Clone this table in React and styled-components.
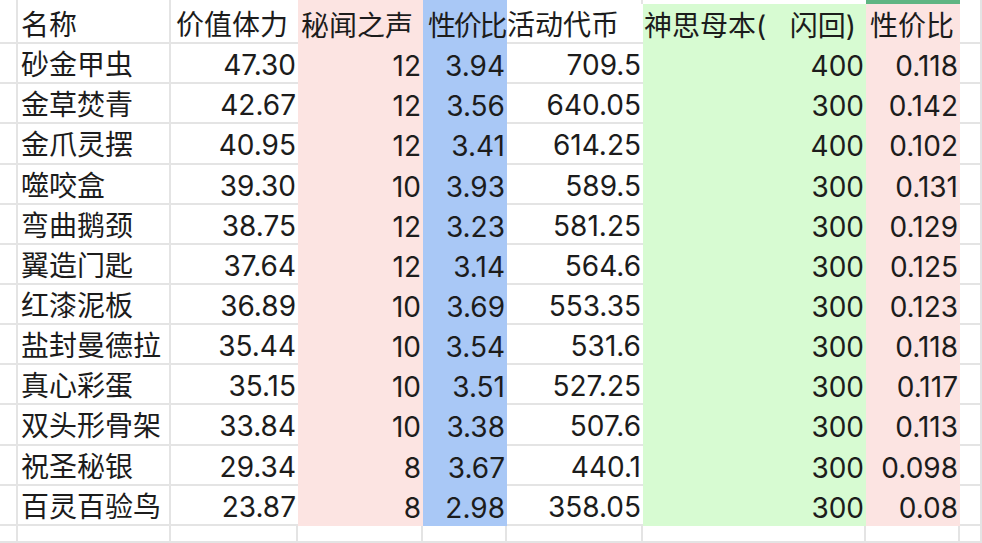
import React from "react";
import styled, { createGlobalStyle } from "styled-components";

const Global = createGlobalStyle`
  html, body { margin: 0; padding: 0; background: #ffffff; }
  body { width: 982px; height: 543px; overflow: hidden; }
`;

const GRID = "#e4e4e4";
const PINK = "#fce4e2";
const BLUE = "#a9c8f6";
const GREEN = "#d7fbd2";
const BAR = "#5fb583";

const COLS = [
  { w: 18 },
  { w: 153, align: "left" },
  { w: 127 },
  { w: 125, fill: PINK },
  { w: 84, fill: BLUE },
  { w: 136 },
  { w: 223, fill: GREEN },
  { w: 94, fill: PINK },
  { w: 22 },
];

const HEADER_PAD = [0, 3, 5, 3, 5, 0, 1, 4, 0];
const HEADER_TIGHT = [false, false, false, false, true, false, false, false, false];

const header = ["", "名称", "价值体力", "秘闻之声", "性价比", "活动代币", "神思母本(   闪回)", "性价比", ""];

const rows = [
  ["砂金甲虫", "47.30", "12", "3.94", "709.5", "400", "0.118"],
  ["金草焚青", "42.67", "12", "3.56", "640.05", "300", "0.142"],
  ["金爪灵摆", "40.95", "12", "3.41", "614.25", "400", "0.102"],
  ["噬咬盒", "39.30", "10", "3.93", "589.5", "300", "0.131"],
  ["弯曲鹅颈", "38.75", "12", "3.23", "581.25", "300", "0.129"],
  ["翼造门匙", "37.64", "12", "3.14", "564.6", "300", "0.125"],
  ["红漆泥板", "36.89", "10", "3.69", "553.35", "300", "0.123"],
  ["盐封曼德拉", "35.44", "10", "3.54", "531.6", "300", "0.118"],
  ["真心彩蛋", "35.15", "10", "3.51", "527.25", "300", "0.117"],
  ["双头形骨架", "33.84", "10", "3.38", "507.6", "300", "0.113"],
  ["祝圣秘银", "29.34", "8", "3.67", "440.1", "300", "0.098"],
  ["百灵百验鸟", "23.87", "8", "2.98", "358.05", "300", "0.08"],
];

const Sheet = styled.div`
  display: grid;
  width: 982px;
  height: 543px;
  grid-template-columns: ${COLS.map((c) => c.w + "px").join(" ")};
  grid-template-rows: 4px repeat(13, 40.15px) 1fr;
  font-family: Inter, "Noto Sans CJK SC", sans-serif;
  font-size: 28px;
  color: #1c1c1c;
  overflow: hidden;
`;

const Cell = styled.div`
  box-sizing: border-box;
  display: flex;
  align-items: center;
  justify-content: ${(p) => (p.$align === "left" ? "flex-start" : "flex-end")};
  padding: 4px ${(p) => (p.$align === "left" ? 0 : 2)}px 0 ${(p) => p.$pad || 0}px;
  background: ${(p) => p.$fill || "#ffffff"};
  border-right: ${(p) => (p.$right ? `2px solid ${GRID}` : "none")};
  border-bottom: ${(p) => (p.$fill ? "none" : `2px solid ${GRID}`)};
  letter-spacing: ${(p) => (p.$tight ? "-2.2px" : "normal")};
  white-space: pre;
  overflow: hidden;
  line-height: 1;
`;

function fillsFor(rowKind) {
  return COLS.map((c, i) => {
    if (rowKind === "bottom") return null;
    if (rowKind === "top") {
      if (i === 3) return PINK;
      if (i === 4) return BLUE;
      if (i === 7) return BAR;
      return null;
    }
    return c.fill || null;
  });
}

function Row({ kind, values, headerRow }) {
  const fills = fillsFor(kind);
  return COLS.map((c, i) => {
    const fill = fills[i];
    const nextFill = i + 1 < COLS.length ? fills[i + 1] : null;
    const right = !fill && !nextFill;
    const align = headerRow ? "left" : c.align;
    const pad = headerRow ? HEADER_PAD[i] : c.align === "left" ? 3 : 0;
    return (
      <Cell
        key={i}
        $fill={fill}
        $right={right}
        $align={align}
        $pad={pad}
        $tight={headerRow && HEADER_TIGHT[i]}
      >
        {values ? values[i] : ""}
      </Cell>
    );
  });
}

export default function App() {
  return (
    <>
      <Global />
      <Sheet>
        <Row kind="top" />
        <Row kind="data" values={header} headerRow />
        {rows.map((r, idx) => (
          <Row key={idx} kind="data" values={["", ...r, ""]} />
        ))}
        <Row kind="bottom" />
      </Sheet>
    </>
  );
}
